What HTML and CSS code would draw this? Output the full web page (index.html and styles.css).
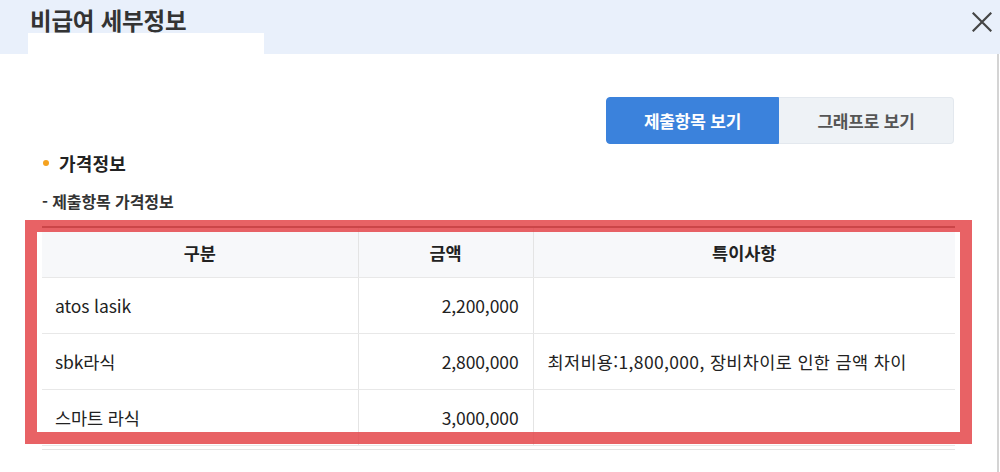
FILE: index.html
```html
<!DOCTYPE html>
<html lang="ko">
<head>
<meta charset="utf-8">
<link rel="stylesheet" href="styles.css">
</head>
<body>
<div class="modal">
  <header class="head">
    <div class="head-left">
      <h1 class="title">비급여 세부정보</h1>
      <div class="patch"></div>
    </div>
    <button class="close" aria-label="닫기">
      <svg width="20" height="20" viewBox="0 0 20 20"><path d="M1.5 1.5 L18.5 18.5 M18.5 1.5 L1.5 18.5" stroke="#454545" stroke-width="2.2" fill="none" stroke-linecap="square"/></svg>
    </button>
  </header>
  <main class="body">
    <div class="tabs">
      <button class="tab active">제출항목 보기</button>
      <button class="tab">그래프로 보기</button>
    </div>
    <h2 class="sec-title"><span class="dot"></span>가격정보</h2>
    <p class="sub">- 제출항목 가격정보</p>
    <div class="table-wrap">
      <table class="price">
        <colgroup><col class="c1"><col class="c2"><col class="c3"></colgroup>
        <thead>
          <tr><th>구분</th><th>금액</th><th>특이사항</th></tr>
        </thead>
        <tbody>
          <tr><td>atos lasik</td><td class="num">2,200,000</td><td></td></tr>
          <tr><td>sbk라식</td><td class="num">2,800,000</td><td class="note">최저비용:1,800,000, 장비차이로 인한 금액 차이</td></tr>
          <tr><td>스마트 라식</td><td class="num">3,000,000</td><td></td></tr>
        </tbody>
      </table>
      <div class="highlight"></div>
    </div>
  </main>
</div>
</body>
</html>
```
FILE: styles.css
```css
* { box-sizing: border-box; }
html, body { margin: 0; padding: 0; background: #fff; }
body {
  font-family: "Noto Sans CJK KR", "Noto Sans", sans-serif;
  color: #222;
  width: 1000px;
  height: 472px;
  overflow: hidden;
}
.modal { width: 1000px; height: 472px; display: flex; flex-direction: column; }
.head {
  height: 54px;
  background: #e9f0fb;
  display: flex;
  justify-content: space-between;
  align-items: flex-start;
}
.head-left { padding-left: 28px; display: flex; flex-direction: column; }
.title {
  margin: 0;
  padding: 6px 0 0 2px;
  height: 33px;
  font-size: 23.5px;
  line-height: 28px;
  font-weight: 700;
  color: #333;
  letter-spacing: -0.2px;
  white-space: nowrap;
}
.patch { width: 236px; height: 21px; background: #fff; }
.close {
  margin: 12px 8px 0 0;
  padding: 0;
  border: 0;
  background: transparent;
  width: 20px;
  height: 20px;
  display: flex;
}
.body {
  flex: 1;
  width: 999px;
  border-right: 2px solid #d4d4d4;
  padding: 43px 43px 0 42px;
  display: flex;
  flex-direction: column;
}
.tabs { display: flex; justify-content: flex-end; }
.tab {
  width: 174px;
  height: 47px;
  font-family: inherit;
  font-size: 17px;
  font-weight: 700;
  border: 1px solid #e3e8ee;
  background: #eef2f6;
  color: #555;
  letter-spacing: -0.2px;
  padding: 0;
}
.tab:first-child { border-radius: 4px 0 0 4px; }
.tab:last-child { border-radius: 0 4px 4px 0; border-left: 0; width: 175px; }
.tab.active { background: #3b82dc; border-color: #3b82dc; color: #fff; width: 173px; }
.sec-title {
  margin: 6px 0 0 0;
  font-size: 18px;
  line-height: 26px;
  font-weight: 700;
  color: #222;
  display: flex;
  align-items: center;
  letter-spacing: 0.2px;
}
.dot {
  width: 6px;
  height: 6px;
  border-radius: 50%;
  background: #f5a21f;
  margin: 0 10px 0 1px;
}
.sub {
  margin: 14px 0 0 0;
  font-size: 16px;
  line-height: 22px;
  font-weight: 700;
  color: #333;
  letter-spacing: -0.1px;
}
.table-wrap {
  position: relative;
  margin-top: 14px;
  width: 913px;
  border-bottom: 1px solid #e4e4e4;
  padding-bottom: 3px;
}
.price {
  width: 913px;
  border-collapse: collapse;
  table-layout: fixed;
  border-top: 2px solid #333;
  font-size: 17.5px;
}
.c1 { width: 316px; }
.c2 { width: 175px; }
.c3 { width: 422px; }
.price th {
  height: 50px;
  background: #f7f8fa;
  font-weight: 700;
  color: #222;
  border-bottom: 1px solid #e8e8e8;
  border-left: 1px solid #e4e4e4;
  padding: 0;
}
.price td {
  height: 56px;
  padding: 0 14px 0 13px;
  border-bottom: 1px solid #e8e8e8;
  border-left: 1px solid #e4e4e4;
  color: #222;
  letter-spacing: -0.1px;
  white-space: nowrap;
}
.price th:first-child, .price td:first-child { border-left: 0; }
.price td:nth-child(3) { padding-left: 14px; }
.price td.note { letter-spacing: 0.35px; }
.price td.num { text-align: right; }
.highlight {
  position: absolute;
  left: -17px;
  top: -6px;
  width: 947px;
  height: 224px;
  border: 12px solid rgba(228, 72, 76, 0.86);
  pointer-events: none;
}
```
